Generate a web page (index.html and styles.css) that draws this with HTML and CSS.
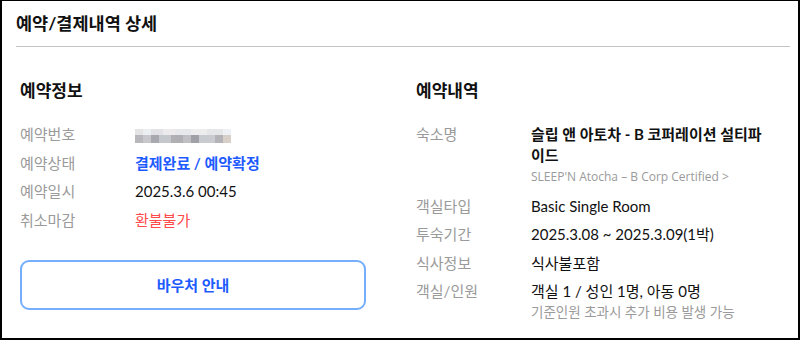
FILE: index.html
```html
<!DOCTYPE html>
<html lang="ko">
<head>
  <meta charset="UTF-8" />
  <title>예약/결제내역 상세</title>
  <link rel="stylesheet" href="styles.css">
</head>
<body>
  <div class="page">
    <div class="header">
      <h1>예약/결제내역 상세</h1>
    </div>
    <div class="content">
      <div class="col col-left">
        <h2>예약정보</h2>
        <div class="rows">
          <div class="row">
            <span class="label">예약번호</span>
            <span class="value"><span class="mosaic"></span></span>
          </div>
          <div class="row">
            <span class="label">예약상태</span>
            <span class="value status">결제완료 / 예약확정</span>
          </div>
          <div class="row">
            <span class="label">예약일시</span>
            <span class="value">2025.3.6 00:45</span>
          </div>
          <div class="row">
            <span class="label">취소마감</span>
            <span class="value refund">환불불가</span>
          </div>
        </div>
        <button class="voucher">바우처 안내</button>
      </div>
      <div class="col col-right">
        <h2>예약내역</h2>
        <div class="rows">
          <div class="row">
            <span class="label">숙소명</span>
            <div class="value">
              <div class="hotel">슬립 앤 아토차 - B 코퍼레이션 설티파이드</div>
              <div class="sub">SLEEP'N Atocha – B Corp Certified &gt;</div>
            </div>
          </div>
          <div class="row">
            <span class="label">객실타입</span>
            <span class="value">Basic Single Room</span>
          </div>
          <div class="row">
            <span class="label">투숙기간</span>
            <span class="value">2025.3.08 ~ 2025.3.09(1박)</span>
          </div>
          <div class="row">
            <span class="label">식사정보</span>
            <span class="value">식사불포함</span>
          </div>
          <div class="row">
            <span class="label">객실/인원</span>
            <div class="value">
              <div>객실 1 / 성인 1명, 아동 0명</div>
              <div class="note">기준인원 초과시 추가 비용 발생 가능</div>
            </div>
          </div>
        </div>
      </div>
    </div>
  </div>
</body>
</html>
```

FILE: styles.css
```css
* {
  box-sizing: border-box;
}
body {
  margin: 0;
  font-family: "Lato", "Noto Sans CJK KR", sans-serif;
  color: #111;
  background: #fff;
}
.page {
  width: 800px;
  height: 340px;
  border: 2px solid #000;
  border-top-width: 1px;
  overflow: hidden;
}
.header {
  margin: 0 8px 0 14px;
  height: 46px;
  border-bottom: 1px solid #c4c4c4;
  display: flex;
  align-items: center;
}
h1 {
  margin: 0;
  font-size: 17.5px;
  font-weight: 700;
  line-height: 24px;
}
.content {
  display: flex;
  gap: 50px;
  padding: 32px 0 0 18px;
}
.col-left {
  width: 346px;
}
.col-right {
  flex: 1;
}
h2 {
  margin: 0 0 21px;
  font-size: 17px;
  font-weight: 700;
  line-height: 24px;
}
.rows {
  display: flex;
  flex-direction: column;
  gap: 8.5px;
}
.row {
  display: flex;
  font-size: 15px;
  line-height: 20px;
}
.label {
  width: 115px;
  flex-shrink: 0;
  color: #9a9a9a;
}
.value {
  color: #111;
}
.status {
  color: #1e5bff;
  font-weight: 700;
}
.refund {
  color: #ff4a4a;
}
.mosaic {
  display: inline-block;
  vertical-align: middle;
  width: 96px;
  height: 14px;
  background:
    linear-gradient(90deg, #e4e4e4 0 8px, #eceff2 8px 16px, #e2e2e6 16px 28px, #eceaea 28px 40px, #e6e8ec 40px 56px, #ededed 56px 72px, #e4e6e8 72px 88px, #eef2f6 88px 96px) top / 100% 6px no-repeat,
    linear-gradient(90deg, #b8b8bc 0 8px, #c8c8cc 8px 16px, #a8a8b0 16px 24px, #c4c8cc 24px 36px, #b0b0b4 36px 48px, #c0c0c4 48px 56px, #a0a0a8 56px 64px, #c8ccd0 64px 80px, #b4b4b8 80px 88px, #d8d0c8 88px 96px) bottom / 100% 8px no-repeat;
}
.voucher {
  display: block;
  width: 346px;
  height: 50px;
  margin-top: 30px;
  border: 2px solid #75aefc;
  border-radius: 9px;
  background: #fff;
  color: #1e5bff;
  font-family: inherit;
  font-size: 15px;
  font-weight: 700;
}
.hotel {
  font-weight: 700;
  line-height: 21px;
  width: 240px;
}
.sub {
  font-family: "Open Sans", "Noto Sans CJK KR", sans-serif;
  font-size: 12px;
  color: #9a9a9a;
  line-height: 20px;
  margin-top: 1px;
}
.note {
  margin-top: 2px;
  font-size: 13.5px;
  color: #9a9a9a;
  line-height: 18px;
}
```
